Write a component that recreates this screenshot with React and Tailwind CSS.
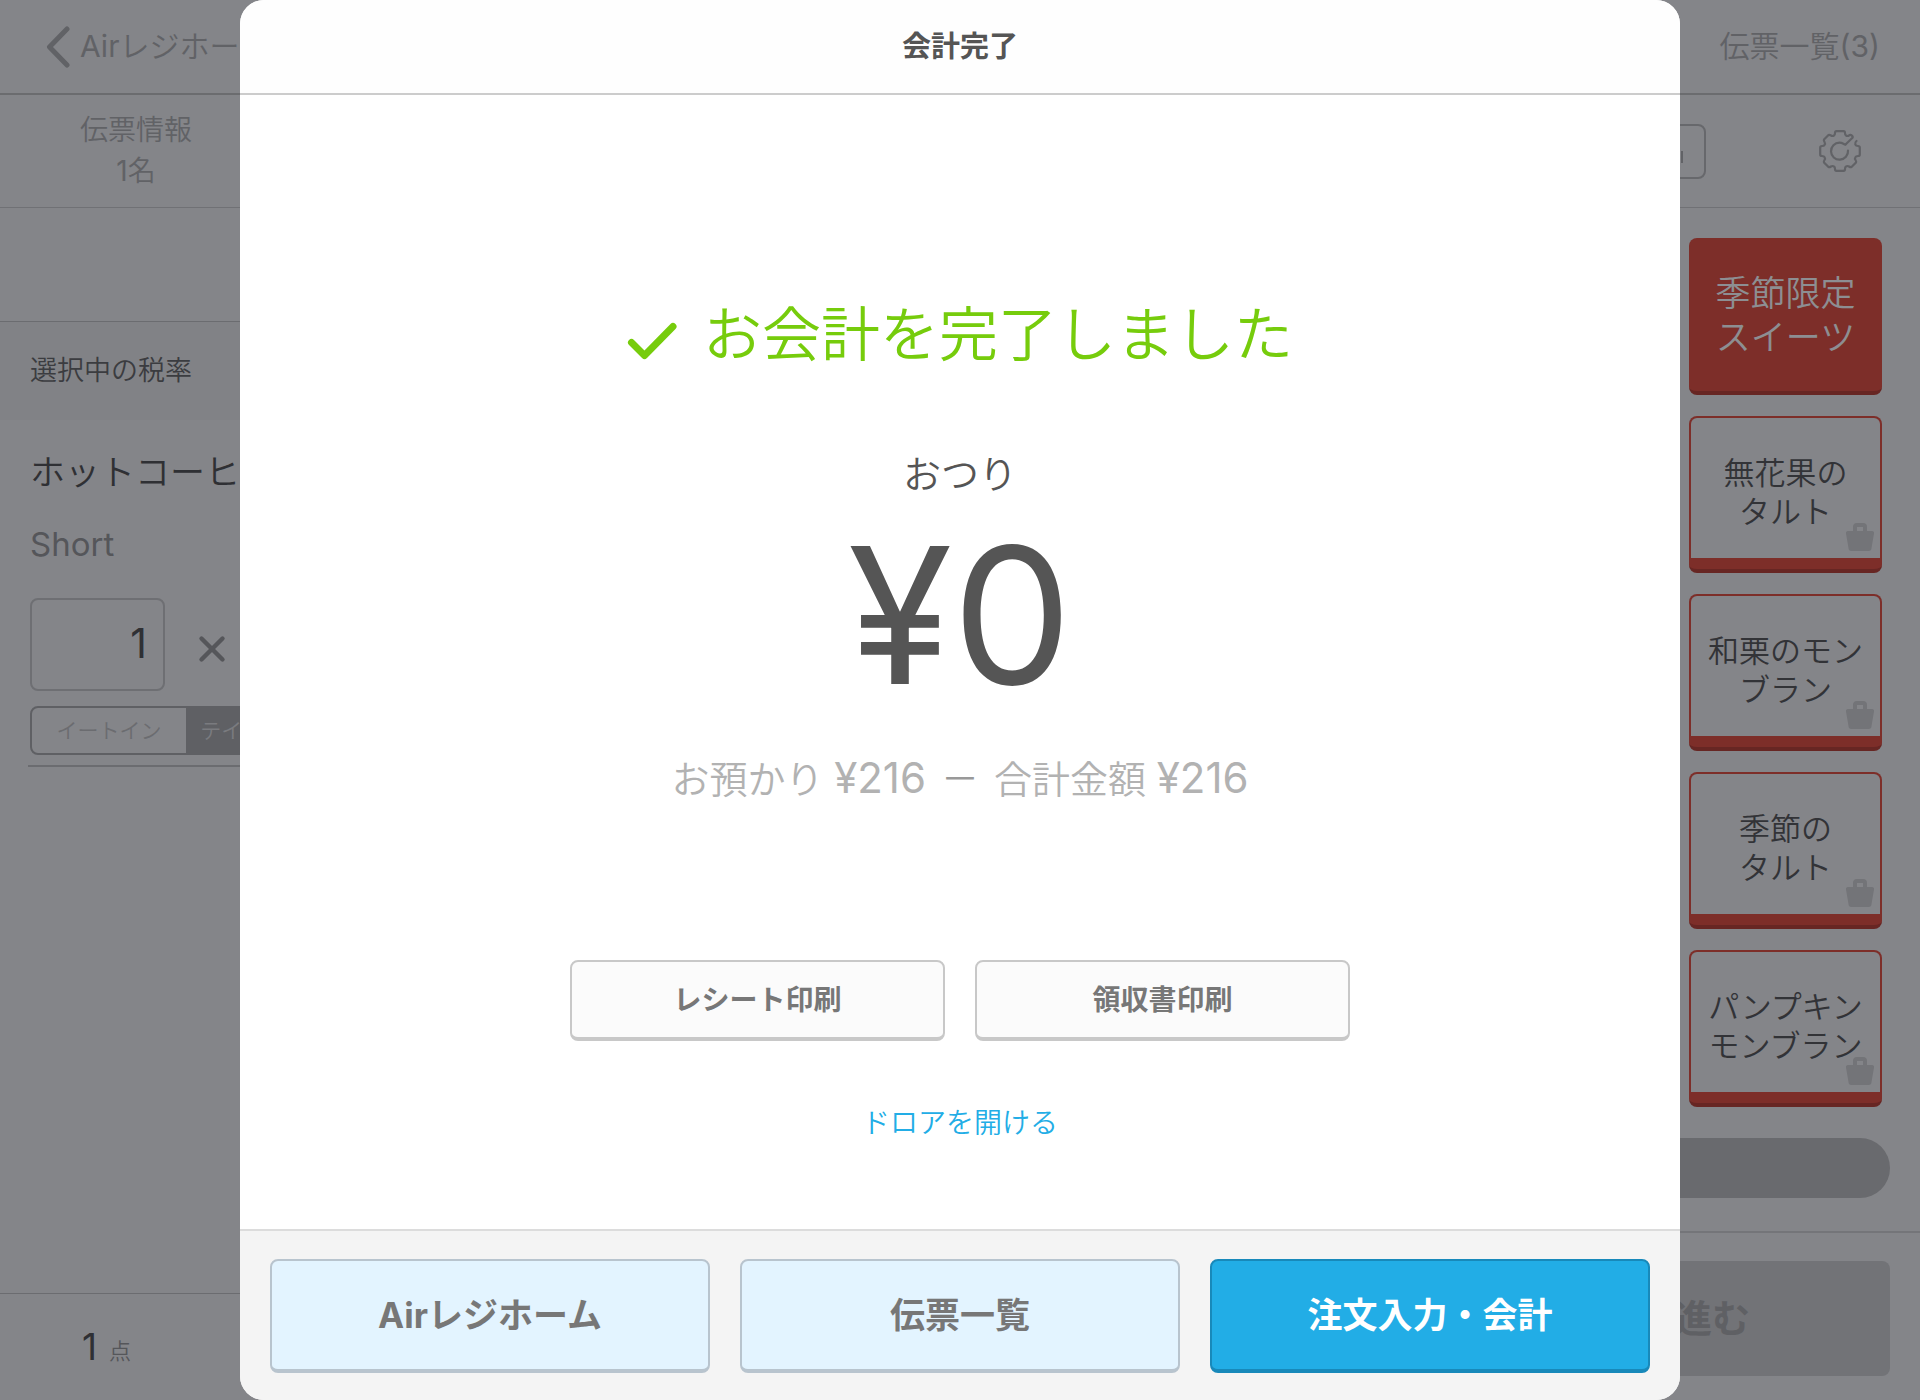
import { X } from "lucide-react"

const menuItems = [
  { lines: ["季節限定", "スイーツ"], category: true },
  { lines: ["無花果の", "タルト"] },
  { lines: ["和栗のモン", "ブラン"] },
  { lines: ["季節の", "タルト"] },
  { lines: ["パンプキン", "モンブラン"] },
]

function BackIcon() {
  return (
    <svg viewBox="0 0 24 42" className="w-6 h-[42px]" fill="none" stroke="currentColor" strokeWidth="5" strokeLinecap="round" strokeLinejoin="round" aria-hidden="true">
      <path d="M21 3L3.500 21L21 39" />
    </svg>
  )
}

function GearIcon() {
  return (
    <svg viewBox="0 0 42 42" className="w-[42px] h-[42px]" fill="none" stroke="currentColor" strokeWidth="2.2" strokeLinecap="round" strokeLinejoin="round" aria-hidden="true">
      <path d="M26.500 14.500L33.500 7.800Q34.300 6.500 32 5Q31 4.500 30 5.500Q28.500 6.500 27 5.500Q26 5 26 3Q26 1.200 24.500 1.200H17.500Q16 1.200 16 3Q16 5 15 5.500Q13.500 6.500 12 5.500Q10.500 4.500 9.500 5L5 9.500Q4.500 10.500 5.500 12Q6.500 13.500 5.500 15Q5 16 3 16Q1.200 16 1.200 17.500V24.500Q1.200 26 3 26Q5 26 5.500 27Q6.500 28.500 5.500 30Q4.500 31.500 5 32.500L9.500 37Q10.500 37.500 12 36.500Q13.500 35.500 15 36.500Q16 37 16 39Q16 40.800 17.500 40.800H24.500Q26 40.800 26 39Q26 37 27 36.500Q28.500 35.500 30 36.500Q31.500 37.500 32.500 37L37 32.500Q37.500 31.500 36.500 30Q35.500 28.500 36.500 27Q37 26 39 26Q40.800 26 40.800 24.500V17.500Q40.800 16 39 16Q37 16 36.300 14.500Q35.700 12.500 37.500 11" />
      <path d="M26.500 14.500C24.500 14.500 24 12.700 20.500 12.700A8.500 8.500 0 1 0 29 20.500" />
    </svg>
  )
}

function BagIcon() {
  return (
    <svg viewBox="0 0 28 28" className="absolute right-[6px] bottom-[7px] w-7 h-7 text-[#737478]" aria-hidden="true">
      <path d="M9 9V4a2 2 0 0 1 2-2h6a2 2 0 0 1 2 2v5" fill="none" stroke="currentColor" strokeWidth="4" />
      <path d="M2 8h24a2 2 0 0 1 2 2.500L25.500 25a3 3 0 0 1-3 3h-17a3 3 0 0 1-3-3L0 10.500A2 2 0 0 1 2 8z" fill="currentColor" />
    </svg>
  )
}

function CheckIcon() {
  return (
    <svg viewBox="0 0 50 38" className="mt-3 w-[50px] h-[38px]" fill="none" stroke="currentColor" strokeWidth="7" strokeLinecap="round" strokeLinejoin="round" aria-hidden="true">
      <path d="M4.500 20.500L17.500 33.500L46 4.500" />
    </svg>
  )
}

function MenuTile({ item }) {
  if (item.category) {
    return (
      <button className="w-[193px] h-[157px] shrink-0 rounded-lg bg-[#7d2e29] border-b-4 border-[#672623] text-[35px] leading-[44px] text-[#8d8e92]">
        {item.lines.map((line) => (
          <span key={line} className="block">{line}</span>
        ))}
      </button>
    )
  }

  return (
    <button className="w-[193px] h-[157px] shrink-0 rounded-lg overflow-hidden bg-[#7d2e29] border-b-4 border-[#672623] flex flex-col px-[2px] pt-[2px] pb-[11px] text-[31px] leading-[39px] text-[#323337]">
      <span className="relative flex-1 w-full pt-2 rounded-t-md bg-[#848589] flex flex-col items-center justify-center">
        {item.lines.map((line) => (
          <span key={line} className="block">{line}</span>
        ))}
        <BagIcon />
      </span>
    </button>
  )
}

function RegisterScreen() {
  return (
    <div className="flex-1 flex flex-col text-[#616266]">
      <header className="h-[95px] shrink-0 border-b-2 border-[#6b6c6f] flex items-center justify-between pl-[46px] pr-[40px] text-[30px]">
        <a href="#home" className="flex items-center gap-[10px]">
          <BackIcon />
          <span><span className="font-normal">Air</span>レジホーム</span>
        </a>
        <a href="#slips">伝票一覧<span className="font-normal">(3)</span></a>
      </header>

      <div className="h-[113px] shrink-0 border-b border-[#707175] flex items-center justify-between pr-[59px]">
        <button className="w-[272px] text-[28px] leading-[41px]">
          <span className="block">伝票情報</span>
          <span className="block"><span className="font-normal">1</span>名</span>
        </button>
        <div className="flex items-center gap-[113px]">
          <button aria-label="表示切替" className="w-[160px] h-[55px] rounded-lg border-2 border-[#67686c] flex items-center justify-end pr-[21px]">
            <span className="mt-3 w-[10px] h-3 border-r-2 border-[#616266]" />
          </button>
          <button aria-label="設定">
            <GearIcon />
          </button>
        </div>
      </div>

      <div className="flex-1 flex">
        {/* Order slip */}
        <section className="w-1/3 flex flex-col">
          <div className="h-[114px] border-b border-[#6b6c70]" />
          <h2 className="h-[98px] flex items-center pl-[30px] bg-[#818286] text-[27px] text-[#3b3c40]">選択中の税率</h2>
          <div className="flex-1 pl-[30px]">
            <p className="mt-[28px] text-[35px] leading-[48px] text-[#2f3034]">ホットコーヒー</p>
            <p className="mt-[26px] text-[33px] leading-[44px] font-normal text-[#55565a]">Short</p>
            <div className="mt-[32px] flex items-center gap-[26px]">
              <input
                type="text"
                aria-label="数量"
                defaultValue="1"
                className="w-[135px] h-[93px] rounded-lg border-2 border-[#6e6f73] bg-transparent pr-[16px] pb-1 text-right text-[41px] font-normal text-[#2f3034]"
              />
              <X size={42} strokeWidth={2.5} className="mt-2 text-[#55565a]" aria-hidden="true" />
            </div>
            <div className="mt-[15px] w-[312px] h-[49px] rounded-lg border-2 border-[#5f6064] overflow-hidden flex text-[21px]">
              <button className="flex-1 text-[#6b6c70]">イートイン</button>
              <button className="flex-1 bg-[#5f6064] text-[#7a7b7f]">テイクアウト</button>
            </div>
            <hr className="mt-[10px] -ml-[2px] border-t-2 border-[#6b6c70]" />
          </div>
          <div className="h-[107px] border-t border-[#6b6c70] pl-[82px] flex items-center gap-3">
            <span className="text-[37px] font-normal text-[#2f3034]">1</span>
            <span className="mt-2 text-[22px] text-[#55565a]">点</span>
          </div>
        </section>

        {/* Menu */}
        <section className="flex-1 flex flex-col">
          <div className="flex-1 flex flex-col items-end gap-[21px] pt-[30px] pr-[38px]">
            {menuItems.map((item) => (
              <MenuTile key={item.lines.join("")} item={item} />
            ))}
          </div>
          <div className="mb-[33px] mr-[30px] h-[60px] rounded-full bg-[#696a6e]" />
          <div className="h-[169px] border-t-2 border-[#747579] pt-[28px] pr-[30px] flex justify-end items-start">
            <button className="w-[470px] h-[115px] rounded-lg bg-[#727377] pr-[140px] text-right text-[38px] font-bold text-[#5f6064]">進む</button>
          </div>
        </section>
      </div>
    </div>
  )
}

function CheckoutDialog() {
  const printButton =
    "w-[375px] h-[81px] rounded-lg border-2 border-b-4 border-[#c8c8c8] bg-[#fbfbfb] text-[28px] font-bold text-[#777777]"
  const footerButton = "flex-1 h-[114px] rounded-lg border-2 border-b-4 text-[35px] font-bold"

  return (
    <div role="dialog" aria-labelledby="dialog-title" className="w-3/4 rounded-3xl overflow-hidden bg-white flex flex-col">
      <div className="h-[95px] shrink-0 border-b-2 border-[#cccccc] bg-[#fefefe] flex items-center justify-center">
        <h1 id="dialog-title" className="text-[29px] font-bold text-[#555555]">会計完了</h1>
      </div>

      <div className="flex-1 flex flex-col items-center pt-[200px]">
        <p className="flex items-center gap-[26px] text-[59px] leading-[80px] text-[#76cc0c]">
          <CheckIcon />
          お会計を完了しました
        </p>
        <p className="mt-[74px] text-[38px] leading-[50px] text-[#555555]">おつり</p>
        <p className="mt-[16px] text-[190px] leading-[200px] font-normal text-[#555555]">¥0</p>
        <p className="mt-[38px] flex gap-[15px] text-[38px] leading-[50px] text-[#b2b2b2]">
          <span>お預かり <span className="text-[42px] font-normal">¥216</span></span>
          <span className="text-[#999999]">－</span>
          <span>合計金額 <span className="text-[42px] font-normal">¥216</span></span>
        </p>
        <div className="mt-[156px] flex gap-[30px]">
          <button className={printButton}>レシート印刷</button>
          <button className={printButton}>領収書印刷</button>
        </div>
        <a href="#drawer" className="mt-[62px] text-[28px] leading-[40px] text-[#22ade6]">ドロアを開ける</a>
      </div>

      <div className="shrink-0 border-t-2 border-[#dcdcdc] bg-[#f4f4f4] flex gap-[30px] px-[30px] pt-[28px] pb-[27px]">
        <button className={`${footerButton} border-[#b8c4ce] bg-[#e3f4ff] text-[#777777]`}>Airレジホーム</button>
        <button className={`${footerButton} border-[#b8c4ce] bg-[#e3f4ff] text-[#777777]`}>伝票一覧</button>
        <button className={`${footerButton} border-[#1889ba] bg-[#22ade6] text-white`}>注文入力・会計</button>
      </div>
    </div>
  )
}

export default function App() {
  return (
    <div lang="ja" className="relative min-h-screen flex flex-col bg-[#848589] font-['Inter','Noto_Sans_CJK_JP',sans-serif] font-[350]">
      <RegisterScreen />
      <div className="absolute inset-0 flex justify-center">
        <CheckoutDialog />
      </div>
    </div>
  )
}
